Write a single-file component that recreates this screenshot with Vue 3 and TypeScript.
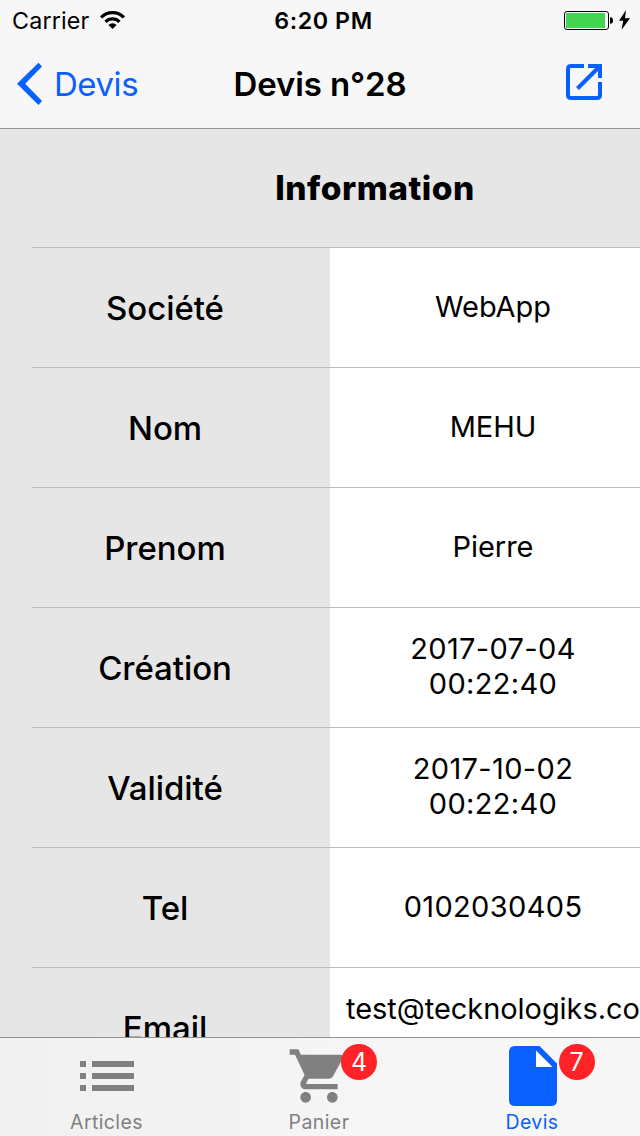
<script setup lang="ts">
interface Row {
  label: string
  lines: string[]
  numeric?: boolean
}

interface Tab {
  name: string
  icon: 'list' | 'cart' | 'document'
  badge?: number
  active?: boolean
}

const rows: Row[] = [
  { label: 'Société', lines: ['WebApp'] },
  { label: 'Nom', lines: ['MEHU'] },
  { label: 'Prenom', lines: ['Pierre'] },
  { label: 'Création', lines: ['2017-07-04', '00:22:40'], numeric: true },
  { label: 'Validité', lines: ['2017-10-02', '00:22:40'], numeric: true },
  { label: 'Tel', lines: ['0102030405'], numeric: true },
  { label: 'Email', lines: ['test@tecknologiks.co', 'm'] },
]

const tabs: Tab[] = [
  { name: 'Articles', icon: 'list' },
  { name: 'Panier', icon: 'cart', badge: 4 },
  { name: 'Devis', icon: 'document', badge: 7, active: true },
]
</script>

<template>
  <div class="screen">
    <header class="top">
      <div class="status">
        <div class="status-left">
          <span class="carrier">Carrier</span>
          <svg class="wifi" width="26" height="20" viewBox="0 0 26 20">
            <path d="M2.1 7.5A15.7 15.7 0 0 1 24.9 7.5" fill="none" stroke="#000" stroke-width="3.2" />
            <path d="M6.5 11.9A9.8 9.8 0 0 1 20.5 11.9" fill="none" stroke="#000" stroke-width="3.2" />
            <path d="M13.5 19L9.4 15A5.8 5.8 0 0 1 17.6 15Z" />
          </svg>
        </div>
        <span class="clock">6:20 PM</span>
        <div class="status-right">
          <svg width="68" height="22" viewBox="0 0 68 22">
            <rect x="1.5" y="1.5" width="44" height="18" rx="2.5" fill="#fff" stroke="#000" />
            <rect x="3" y="3" width="39" height="15" fill="#44d551" />
            <path d="M47 7.2Q50 7.2 50 10.5T47 13.8Z" />
            <path d="M63 0L56 10.8H60.2L58.6 19.7L67 8.3H62Z" />
          </svg>
        </div>
      </div>
      <div class="nav">
        <div class="back">
          <svg width="26" height="44" viewBox="0 0 26 44">
            <path d="M22.5 0.7L26 4.6L9.2 21.8L26 39L22.5 42.9L1 21.8Z" fill="#0a60ff" />
          </svg>
          <span class="back-label">Devis</span>
        </div>
        <h1 class="title">Devis n°28</h1>
        <div class="open">
          <svg width="36" height="36" viewBox="0 0 36 36" fill="none" stroke="#0a60ff" stroke-width="4">
            <path d="M18 2H5Q2 2 2 5V31Q2 34 5 34H31Q34 34 34 31V18" />
            <path d="M22 2H34V14" />
            <path d="M33 3L11.5 24.5" />
          </svg>
        </div>
      </div>
    </header>

    <main class="content">
      <section class="section-head"><h2 class="section-title">Information</h2></section>
      <div v-for="row in rows" :key="row.label" class="row">
        <div class="label">{{ row.label }}</div>
        <div class="value" :class="{ double: row.lines.length > 1, numeric: row.numeric }">
          <span v-for="line in row.lines" :key="line" class="line">{{ line }}</span>
        </div>
      </div>
    </main>

    <nav class="tabs">
      <div v-for="tab in tabs" :key="tab.name" class="tab" :class="{ active: tab.active }">
        <div class="icon">
          <svg v-if="tab.icon === 'list'" width="64" height="64" viewBox="0 0 64 64">
            <path d="M5 17h6v6H5zM17 17h42v6H17zM5 29h6v6H5zM17 29h42v6H17zM5 41h6v6H5zM17 41h42v6H17z" />
          </svg>
          <svg v-else-if="tab.icon === 'cart'" width="64" height="64" viewBox="0 0 24 24">
            <path
              d="M7 18c-1.1 0-1.99.9-1.99 2S5.9 22 7 22s2-.9 2-2-.9-2-2-2zM1 2v2h2l3.6 7.59-1.35 2.45c-.16.28-.25.61-.25.96 0 1.1.9 2 2 2h12v-2H7.42c-.14 0-.25-.11-.25-.25l.03-.12.9-1.63h7.45c.75 0 1.41-.41 1.75-1.03l3.58-6.49A1 1 0 0 0 20 4H5.21l-.94-2H1zm16 16c-1.1 0-1.99.9-1.99 2s.89 2 1.99 2 2-.9 2-2-.9-2-2-2z"
            />
          </svg>
          <svg v-else width="64" height="64" viewBox="0 0 64 64">
            <path d="M14 2H38.5L56 19.5V56Q56 62 50 62H14Q8 62 8 56V8Q8 2 14 2Z" />
            <path d="M35 6.5V23H51.5Z" fill="#fff" />
          </svg>
          <span v-if="tab.badge" class="badge">{{ tab.badge }}</span>
        </div>
        <span class="tab-name">{{ tab.name }}</span>
      </div>
    </nav>
  </div>
</template>

<style>
body {
  margin: 0;
}
</style>

<style scoped>
.screen {
  width: 640px;
  height: 1136px;
  overflow: hidden;
  display: flex;
  flex-direction: column;
  background: #fff;
  color: #000;
  font-family: Inter, 'Liberation Sans', sans-serif;
}
svg {
  display: block;
}
.top {
  box-sizing: border-box;
  height: 129px;
  flex: none;
  background: #f7f7f7;
  border-bottom: 1px solid #949494;
}
.status {
  height: 40px;
  display: grid;
  grid-template-columns: 1fr auto 1fr;
}
.status-left {
  display: flex;
  padding-left: 12px;
}
.carrier {
  width: 87px;
  font-size: 23.3px;
  line-height: 41px;
  letter-spacing: 0.15px;
}
.wifi {
  margin-top: 10px;
}
.clock {
  font-size: 23.3px;
  font-weight: 600;
  line-height: 41px;
  letter-spacing: 0.55px;
  padding-left: 7px;
}
.status-right {
  display: flex;
  justify-content: flex-end;
  padding: 10px 9px 0 0;
}
.nav {
  height: 88px;
  display: grid;
  grid-template-columns: 1fr auto 1fr;
}
.back {
  display: flex;
  padding-left: 16px;
  color: #0a60ff;
}
.back svg {
  margin-top: 22px;
}
.back-label {
  margin-left: 12px;
  font-size: 33px;
  line-height: 88px;
  letter-spacing: -0.45px;
}
.title {
  margin: 0;
  font-size: 33px;
  font-weight: 600;
  line-height: 88px;
  letter-spacing: -0.1px;
}
.open {
  display: flex;
  justify-content: flex-end;
  padding: 24px 38px 0 0;
}
.content {
  flex: 1;
  min-height: 0;
  overflow: hidden;
  background: #e6e6e6;
}
.section-head {
  height: 118px;
  padding-left: 110px;
  text-align: center;
}
.section-title {
  margin: 0;
  font-size: 33.5px;
  line-height: 118px;
  font-weight: 800;
  letter-spacing: 0.5px;
}
.row {
  height: 120px;
  display: flex;
  background: linear-gradient(#bcbcbc, #bcbcbc) 32px 0 / 608px 1px no-repeat;
}
.label {
  width: 330px;
  flex: none;
  text-align: center;
  font-size: 33px;
  font-weight: 500;
  line-height: 122px;
  letter-spacing: -0.05px;
}
.value {
  width: 326px;
  flex: none;
  height: 119px;
  margin-top: 1px;
  background: #fff;
  font-size: 29px;
  text-align: center;
  letter-spacing: -0.05px;
}
.numeric {
  letter-spacing: 0.35px;
}
.line {
  display: block;
  line-height: 117px;
}
.double {
  box-sizing: border-box;
  padding-top: 23px;
}
.double .line {
  line-height: 35px;
}
.tabs {
  box-sizing: border-box;
  height: 99px;
  flex: none;
  display: grid;
  grid-template-columns: 213px 212px 215px;
  border-top: 1px solid #949494;
  background: linear-gradient(90deg, #f1f1f1 0%, #f3f3f3 35%, #f6f6f6 58%, #f7f7f7 100%);
  color: #808080;
  fill: #808080;
}
.tab {
  display: flex;
  flex-direction: column;
  align-items: center;
}
.icon {
  position: relative;
  margin-top: 6px;
}
.badge {
  position: absolute;
  left: 54px;
  top: 0;
  width: 36px;
  height: 36px;
  border-radius: 50%;
  background: #ff2226;
  color: #fff;
  font-size: 25px;
  line-height: 37px;
  text-align: center;
}
.active .badge {
  left: 58px;
}
.tab-name {
  font-size: 19.5px;
  line-height: 28px;
  letter-spacing: 0.4px;
}
.active .tab-name {
  margin-right: 1px;
}
.active {
  color: #0a60ff;
  fill: #0a60ff;
}
</style>
